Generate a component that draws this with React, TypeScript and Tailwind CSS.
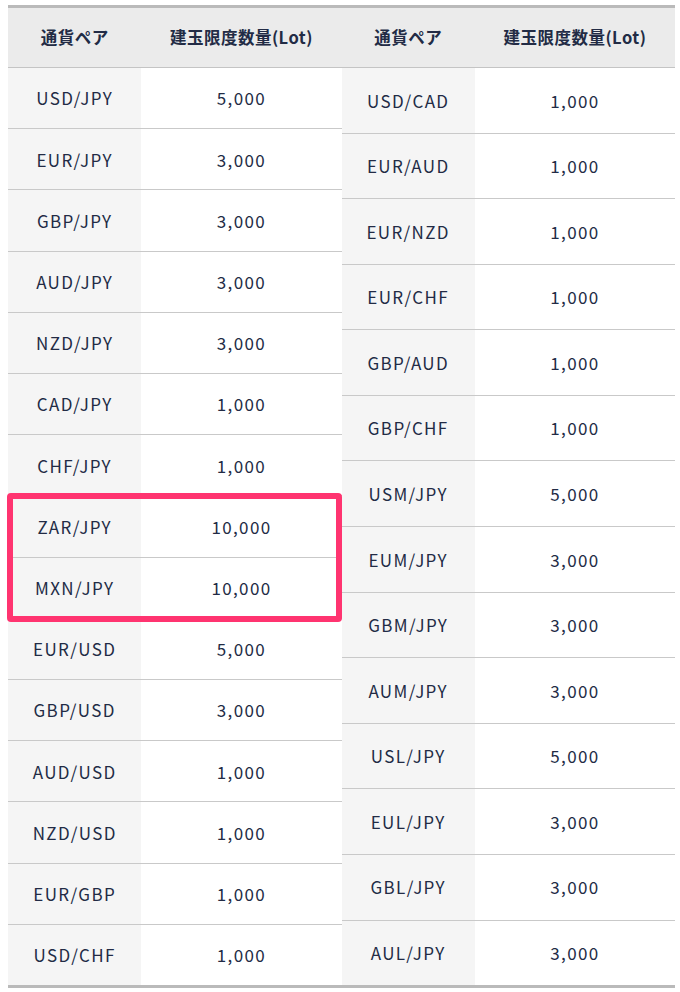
import React from "react";

// 建玉限度数量テーブル（左右2列）
const LEFT: [string, string][] = [
  ["USD/JPY", "5,000"],
  ["EUR/JPY", "3,000"],
  ["GBP/JPY", "3,000"],
  ["AUD/JPY", "3,000"],
  ["NZD/JPY", "3,000"],
  ["CAD/JPY", "1,000"],
  ["CHF/JPY", "1,000"],
  ["ZAR/JPY", "10,000"],
  ["MXN/JPY", "10,000"],
  ["EUR/USD", "5,000"],
  ["GBP/USD", "3,000"],
  ["AUD/USD", "1,000"],
  ["NZD/USD", "1,000"],
  ["EUR/GBP", "1,000"],
  ["USD/CHF", "1,000"],
];

const RIGHT: [string, string][] = [
  ["USD/CAD", "1,000"],
  ["EUR/AUD", "1,000"],
  ["EUR/NZD", "1,000"],
  ["EUR/CHF", "1,000"],
  ["GBP/AUD", "1,000"],
  ["GBP/CHF", "1,000"],
  ["USM/JPY", "5,000"],
  ["EUM/JPY", "3,000"],
  ["GBM/JPY", "3,000"],
  ["AUM/JPY", "3,000"],
  ["USL/JPY", "5,000"],
  ["EUL/JPY", "3,000"],
  ["GBL/JPY", "3,000"],
  ["AUL/JPY", "3,000"],
];

function LotTable({ rows, highlight }: { rows: [string, string][]; highlight?: boolean }) {
  return (
    <div className="relative flex-1 flex flex-col">
      {/* ── Header ── */}
      <div className="flex h-[60px] bg-[#ebebeb] border-b border-[#c4c4c4] font-bold text-[16.5px] tracking-[0.03em]">
        <div className="w-[40%] flex items-center justify-center">通貨ペア</div>
        <div className="flex-1 flex items-center justify-center">建玉限度数量(Lot)</div>
      </div>

      {/* ── Rows ── */}
      <div className="h-[917px] flex flex-col">
        {rows.map(([pair, lot], i) => (
          <div
            key={pair}
            className={
              "flex-1 flex min-h-0 " + (i < rows.length - 1 ? "border-b border-[#c9c9c9]" : "")
            }
          >
            <div className="w-[40%] bg-[#f5f5f5] flex items-center justify-center">{pair}</div>
            <div className="flex-1 bg-white flex items-center justify-center">{lot}</div>
          </div>
        ))}
      </div>

      {/* ZAR / MXN 強調枠 */}
      {highlight && (
        <div className="absolute left-[-1px] top-[485px] w-[335px] h-[129px] border-[6px] border-[#ff3470] rounded-[4px] pointer-events-none" />
      )}
    </div>
  );
}

export default function App() {
  return (
    <div
      className="bg-white w-[680px] h-[992px] px-[8px] pt-[5px] text-[#222b45] text-[17px] tracking-[0.08em]"
      style={{ fontFamily: '"Noto Sans CJK JP", "Noto Sans", sans-serif' }}
    >
      <div className="flex w-[667px] border-t-[3px] border-b-[3px] border-[#bababa]">
        <LotTable rows={LEFT} highlight />
        <LotTable rows={RIGHT} />
      </div>
    </div>
  );
}
